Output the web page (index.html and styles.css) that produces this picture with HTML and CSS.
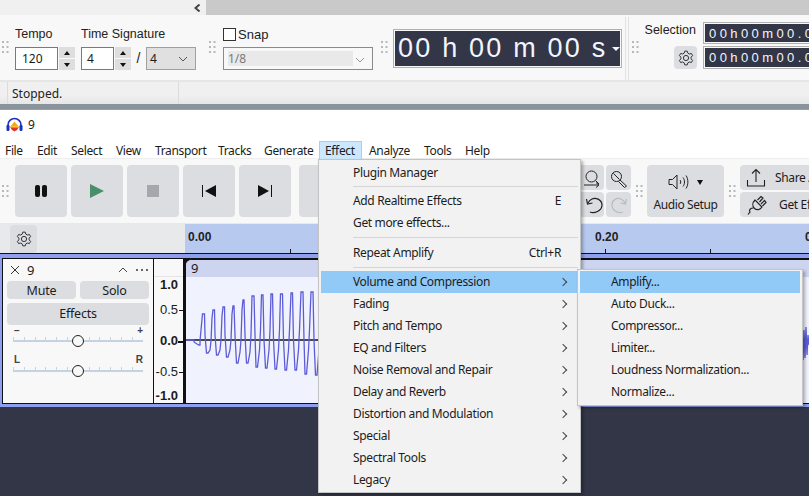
FILE: index.html
```html
<!DOCTYPE html>
<html lang="en">
<head>
  <meta charset="UTF-8">
  <title>Audacity - Effect menu</title>
  <link rel="stylesheet" href="styles.css">
</head>
<body>
  <svg class="defs" width="0" height="0">
    <symbol id="grip" viewBox="0 0 7 13">
      <rect x="0" y="0" width="2" height="2"/><rect x="4.5" y="0" width="2" height="2"/>
      <rect x="0" y="5" width="2" height="2"/><rect x="4.5" y="5" width="2" height="2"/>
      <rect x="0" y="10" width="2" height="2"/><rect x="4.5" y="10" width="2" height="2"/>
    </symbol>
    <symbol id="gear" viewBox="0 0 16 16">
      <path fill="none" stroke="#33343a" stroke-width="1" stroke-linejoin="round" d="M6.2 3.1 6.8 1.1H9.2L9.8 3.1 11.3 4 13.4 3.5 14.6 5.6 13.1 7.1V8.9L14.6 10.4 13.4 12.5 11.3 12 9.8 12.9 9.2 14.9H6.8L6.2 12.9 4.7 12 2.6 12.5 1.4 10.4 2.9 8.9V7.1L1.4 5.6 2.6 3.5 4.7 4Z"/>
      <circle cx="8" cy="8" r="2.6" fill="none" stroke="#33343a"/>
    </symbol>
    <symbol id="chev" viewBox="0 0 10 6">
      <path d="M1 1 5 5 9 1" fill="none" stroke="currentColor" stroke-width="1"/>
    </symbol>
  </svg>

  <div class="collapse-bar">
    <div class="collapse-left">
      <svg class="collapse-icon" width="7" height="8" viewBox="0 0 7 8"><path d="M5.5 .5 1.5 4 5.5 7.5" fill="none" stroke="#444" stroke-width="2"/></svg>
    </div>
    <div class="collapse-right"></div>
  </div>

  <div class="top-toolbar">
    <svg class="grip grip-first"><use href="#grip"/></svg>
    <div class="tool-group tempo">
      <div class="tool-label">Tempo</div>
      <div class="field-row">
        <div class="num-input w-tempo">120</div>
        <div class="spinner"><span class="spin-btn"><i class="tri-up"></i></span><span class="spin-btn"><i class="tri-down"></i></span></div>
      </div>
    </div>
    <div class="tool-group signature">
      <div class="tool-label">Time Signature</div>
      <div class="field-row">
        <div class="num-input w-sig">4</div>
        <div class="spinner"><span class="spin-btn"><i class="tri-up"></i></span><span class="spin-btn"><i class="tri-down"></i></span></div>
        <span class="slash">/</span>
        <div class="sig-select">4<svg class="select-chev" width="10" height="6"><use href="#chev"/></svg></div>
      </div>
    </div>
    <svg class="grip grip-snap"><use href="#grip"/></svg>
    <div class="tool-group snap">
      <div class="snap-label"><span class="checkbox"></span>Snap</div>
      <div class="snap-select"><span class="snap-value">1/8</span><svg class="select-chev light" width="10" height="6"><use href="#chev"/></svg></div>
    </div>
    <svg class="grip grip-time"><use href="#grip"/></svg>
    <div class="time-display">00 h 00 m 00 s<i class="time-arrow"></i></div>
    <div class="double-sep"></div>
    <svg class="grip grip-sel"><use href="#grip"/></svg>
    <div class="selection">
      <div class="sel-side">
        <div class="sel-label">Selection</div>
        <div class="gear-btn small"><svg width="16" height="16"><use href="#gear"/></svg></div>
      </div>
      <div class="sel-fields">
        <div class="sel-time">00h00m00.0</div>
        <div class="sel-time">00h00m00.0</div>
      </div>
    </div>
  </div>

  <div class="status-bar"><div class="status-cell">Stopped.</div></div>
  <div class="window-edge"></div>

  <div class="title-bar">
    <svg class="app-logo" width="17" height="15" viewBox="0 0 17 15">
      <path d="M2 11V8a6.5 6.5 0 0 1 13 0v3" fill="none" stroke="#1c2fc4" stroke-width="1.6"/>
      <rect x=".5" y="8" width="3" height="6" rx="1.2" fill="#1c2fc4"/>
      <rect x="13.5" y="8" width="3" height="6" rx="1.2" fill="#1c2fc4"/>
      <path d="M4 10 6 7.5 8.5 4.5 11 7.5 13 10Z" fill="#f6a623"/>
      <path d="M4 10H13L11 13 8.5 14.5 6 13Z" fill="#e2352a"/>
      <rect x="4" y="9.5" width="9" height="1" fill="#f9d648"/>
    </svg>
    <span>9</span>
  </div>

  <div class="menu-bar">
    <span class="menu-item m-file">File</span>
    <span class="menu-item m-edit">Edit</span>
    <span class="menu-item m-select">Select</span>
    <span class="menu-item m-view">View</span>
    <span class="menu-item m-transport">Transport</span>
    <span class="menu-item m-tracks">Tracks</span>
    <span class="menu-item m-generate">Generate</span>
    <span class="menu-item m-effect active">Effect</span>
    <span class="menu-item m-analyze">Analyze</span>
    <span class="menu-item m-tools">Tools</span>
    <span class="menu-item m-help">Help</span>
  </div>

  <div class="transport-row">
    <svg class="grip grip-first"><use href="#grip"/></svg>
    <div class="big-btn first">
      <svg width="14" height="14" viewBox="0 0 14 14"><rect x="1" y="1" width="5" height="12" rx="2" fill="#111"/><rect x="8" y="1" width="5" height="12" rx="2" fill="#111"/></svg>
    </div>
    <div class="big-btn">
      <svg width="16" height="16" viewBox="0 0 16 16"><path d="M1 1 15 8 1 15Z" fill="#4a8f6c"/></svg>
    </div>
    <div class="big-btn">
      <svg width="12" height="12" viewBox="0 0 12 12"><rect width="12" height="12" fill="#a4a7ae"/></svg>
    </div>
    <div class="big-btn">
      <svg width="16" height="14" viewBox="0 0 16 14"><rect x="1" y="1" width="1" height="12" fill="#111"/><path d="M15 1V13L4 7Z" fill="#111"/></svg>
    </div>
    <div class="big-btn">
      <svg width="16" height="14" viewBox="0 0 16 14"><rect x="14" y="1" width="1" height="12" fill="#111"/><path d="M1 1V13L12 7Z" fill="#111"/></svg>
    </div>
    <div class="big-btn after-gap"></div>

    <div class="zoom-grid">
      <div class="small-btn">
        <svg width="22" height="22" viewBox="0 0 22 22" fill="none" stroke="#222"><circle cx="10.5" cy="9.5" r="5.5"/><path d="M14.5 13.5 18 17M3 18H17M15 15.5 18 18 15 20.5"/></svg>
      </div>
      <div class="small-btn">
        <svg width="22" height="22" viewBox="0 0 22 22" fill="none" stroke="#222"><circle cx="8.5" cy="9.5" r="5"/><path d="M12 13 18.5 19 16.5 20.5 10.5 14.5"/><path d="M5.5 6.5 11.5 12.5"/></svg>
      </div>
      <div class="small-btn">
        <svg width="22" height="22" viewBox="0 0 22 22" fill="none" stroke="#222" stroke-width="1.2"><path d="M9 18C13 20 21 17 21 11 21 6 15 3 11 5 9 6 8 7 7 9"/><path d="M5.5 5 6.5 10 11.5 9"/></svg>
      </div>
      <div class="small-btn">
        <svg width="22" height="22" viewBox="0 0 22 22" fill="none" stroke="#b9bbc0" stroke-width="1.2"><path d="M15 18C11 20 4 17 4 11 4 6 9 3 13 5 15 6 16 7 17 9"/><path d="M18.5 5 17.5 10 12.5 9"/></svg>
      </div>
    </div>
    <svg class="grip grip-audio"><use href="#grip"/></svg>
    <div class="audio-btn">
      <div class="audio-icons">
        <svg width="21" height="18" viewBox="0 0 21 18" fill="none" stroke="#222"><path d="M1 6.5H4.5L9 2V16L4.5 11.5H1Z"/><path d="M12 7C13 8 13 10 12 11"/><path d="M15 4.5C17 7 17 11 15 13.5"/><path d="M18 2.5C20.5 6 20.5 12 18 15.5"/></svg>
        <i class="audio-arrow"></i>
      </div>
      <div class="audio-label">Audio Setup</div>
    </div>
    <svg class="grip grip-share"><use href="#grip"/></svg>
    <div class="share-col">
      <div class="share-btn">
        <svg width="20" height="20" viewBox="0 0 20 20" fill="none" stroke="#222" stroke-width="1.1"><path d="M1.5 12V18H18.5V12"/><path d="M10 14V2M6 5.5 10 1.5 14 5.5"/></svg>
        <span>Share Audio</span>
      </div>
      <div class="share-btn plug">
        <svg width="22" height="22" viewBox="0 0 22 22" fill="none" stroke="#222" stroke-width="1.2"><path d="M9 6 16 13C14 16 11 16.500 8.500 14.500 6 12 6.500 8.500 9 6Z"/><path d="M11.500 6 15 2.500 17 4 13.500 8M15 10 18.500 6.500 20 8.500 16.500 12"/><path d="M7.500 14C4.500 14 2.500 16 4 18L2 20.500"/></svg>
        <span>Get Effects</span>
      </div>
    </div>
  </div>

  <div class="ruler-row">
    <div class="ruler-side"><div class="gear-btn"><svg width="16" height="16"><use href="#gear"/></svg></div></div>
    <div class="ruler">
      <span class="ruler-num r-zero">0.00</span>
      <span class="ruler-tick t-a"></span>
      <span class="ruler-num r-two">0.20</span>
      <span class="ruler-tick t-b"></span>
      <span class="ruler-tick t-c"></span>
      <span class="ruler-num r-three">0.30</span>
    </div>
  </div>

  <div class="track-area">
    <div class="track-row">
      <div class="track-panel">
        <div class="panel-head">
          <svg class="close-x" width="10" height="10" viewBox="0 0 10 10"><path d="M1 1 9 9M9 1 1 9" stroke="#333" fill="none"/></svg>
          <span class="track-name">9</span>
          <svg class="collapse-up" width="10" height="6" viewBox="0 0 10 6"><path d="M1 5 5 1 9 5" fill="none" stroke="currentColor"/></svg>
          <span class="more-dots"><i></i><i></i><i></i></span>
        </div>
        <div class="btn-pair"><div class="panel-btn">Mute</div><div class="panel-btn">Solo</div></div>
        <div class="panel-btn effects">Effects</div>
        <div class="slider-caption gain-cap"><span>−</span><span>+</span></div>
        <div class="slider"><i class="thumb"></i></div>
        <div class="slider-caption pan-cap"><span>L</span><span>R</span></div>
        <div class="slider"><i class="thumb"></i></div>
      </div>
      <div class="v-ruler">
        <span class="v-num strong v1">1.0</span>
        <span class="v-num tick v2">0.5</span>
        <span class="v-num strong tick v3">0.0</span>
        <span class="v-num tick v4">-0.5</span>
        <span class="v-num strong v5">-1.0</span>
      </div>
      <div class="clip">
        <div class="clip-head">9</div>
        <svg class="wave" viewBox="186 277 623 126" preserveAspectRatio="none">
          <path d="M186 340H809" stroke="#111" stroke-width="1.5"/>
          <path d="M186 340H194V342L197 344 199 345H200V341L201 330 202.5 314H204.5L205 335 206.5 353H208L210 350 211 341 212 318 213 310H214.5L215 335 216.5 355H218L220 350 221 340 222 316 223 307H224.5L225 335 226.5 357H228L230 350 231 340 232 314 233 306H234L235 335 236.5 363H238L240 352 241 340 242 310 243 300H244L245 335 246.5 363H248L250 352 251 335 252 296H254L255 335 256 367H257.5L259.5 350 260.5 330 261.5 295H263L264 340 265.5 368H267L269 350 270 330 271 294H272.5L273.5 340 275 369H276.5L278.5 350 279.5 330 280.5 294H282.5L283.5 340 285 370H286.5L288.5 350 289.5 330 291 293H292.5L293.5 340 295 370H296.5L298.5 350 299.5 330 301 292H303L304 340 305 374H306.5L308.5 350 309.5 330 311 292H313L314 340 315.5 375H317L319 350 330 340M800 340 803 360 804 330 805 358 806 327 807 355 808 335 809 345" fill="none" stroke="#5c5cd8" stroke-width="1.3"/>
        </svg>
      </div>
    </div>
  </div>
  <div class="workspace"></div>

  <div class="popup effect-menu">
    <div class="popup-item">Plugin Manager</div>
    <div class="popup-sep"></div>
    <div class="popup-item">Add Realtime Effects<span class="shortcut">E</span></div>
    <div class="popup-item">Get more effects...</div>
    <div class="popup-sep"></div>
    <div class="popup-item">Repeat Amplify<span class="shortcut">Ctrl+R</span></div>
    <div class="popup-sep thin"></div>
    <div class="popup-item sub hot">Volume and Compression</div>
    <div class="popup-item sub">Fading</div>
    <div class="popup-item sub">Pitch and Tempo</div>
    <div class="popup-item sub">EQ and Filters</div>
    <div class="popup-item sub">Noise Removal and Repair</div>
    <div class="popup-item sub">Delay and Reverb</div>
    <div class="popup-item sub">Distortion and Modulation</div>
    <div class="popup-item sub">Special</div>
    <div class="popup-item sub">Spectral Tools</div>
    <div class="popup-item sub">Legacy</div>
  </div>

  <div class="popup volume-menu">
    <div class="popup-item hot">Amplify...</div>
    <div class="popup-item">Auto Duck...</div>
    <div class="popup-item">Compressor...</div>
    <div class="popup-item">Limiter...</div>
    <div class="popup-item">Loudness Normalization...</div>
    <div class="popup-item">Normalize...</div>
  </div>
</body>
</html>
```

FILE: styles.css
```css
* {
  box-sizing: border-box;
}
body {
  margin: 0;
  width: 809px;
  height: 496px;
  overflow: hidden;
  position: relative;
  font-family: "Noto Sans", Arial, sans-serif;
  font-size: 12px;
  color: #1c1c1c;
  background: #fff;
}
.defs {
  position: absolute;
}
.grip {
  width: 7px;
  height: 13px;
  flex: none;
  fill: #b4b8c0;
}

/* top toolbar */
.collapse-bar {
  display: flex;
  height: 15px;
}
.collapse-left {
  width: 206px;
  background: #f0f0f0;
  display: flex;
  justify-content: flex-end;
  align-items: center;
  padding-right: 5px;
}
.collapse-right {
  flex: 1;
  background: #c9c9c9;
}
.top-toolbar {
  display: flex;
  height: 67px;
  background: #f8f8f8;
  border-bottom: 2px solid #e6e6e6;
  font-family: "Liberation Sans", Arial, sans-serif;
  font-size: 12.5px;
}
.top-toolbar .grip {
  margin-top: 26px;
}
.top-toolbar .grip-first {
  margin-left: 2px;
}
.tool-group {
  padding-top: 11px;
}
.tempo {
  margin-left: 6px;
}
.signature {
  margin-left: 6px;
}
.tool-label {
  height: 16px;
  line-height: 16px;
  margin-bottom: 5px;
  color: #222;
}
.field-row {
  display: flex;
}
.num-input {
  height: 23px;
  background: #fff;
  border: 1px solid #7a7a7a;
  line-height: 21px;
  padding-left: 5px;
  font-family: "Noto Sans", sans-serif;
  font-size: 12px;
}
.w-tempo {
  width: 43px;
  padding-left: 6px;
}
.w-sig {
  width: 33px;
}
.spinner {
  width: 16px;
  margin-left: 1px;
  display: flex;
  flex-direction: column;
  gap: 1px;
}
.spin-btn {
  flex: 1;
  background: #dedede;
  display: flex;
  align-items: center;
  justify-content: center;
}
.tri-up,
.tri-down {
  width: 0;
  height: 0;
  border-left: 3.5px solid transparent;
  border-right: 3.5px solid transparent;
}
.tri-up {
  border-bottom: 4px solid #111;
}
.tri-down {
  border-top: 4px solid #111;
}
.slash {
  width: 15px;
  text-align: center;
  line-height: 23px;
  font-size: 14px;
}
.sig-select {
  width: 50px;
  height: 23px;
  background: #e0e0e0;
  border: 1px solid #a0a0a0;
  line-height: 22px;
  padding-left: 3px;
  position: relative;
  font-family: "Noto Sans", sans-serif;
  font-size: 12px;
}
.select-chev {
  position: absolute;
  right: 7px;
  top: 8px;
  color: #555;
}
.select-chev.light {
  color: #999;
  top: 9px;
}
.grip-snap {
  margin-left: 13px;
}
.snap {
  margin-left: 7px;
  width: 150px;
  padding-top: 12px;
}
.snap-label {
  display: flex;
  align-items: center;
  gap: 2px;
  height: 14px;
  margin-bottom: 6px;
  font-size: 13px;
}
.checkbox {
  width: 13px;
  height: 13px;
  background: #fff;
  border: 1px solid #333;
}
.snap-select {
  height: 23px;
  border: 1px solid #8a8a8a;
  padding: 3px 0 0 4px;
  position: relative;
  background: #f8f8f8;
}
.snap-value {
  display: block;
  width: 125px;
  height: 15px;
  line-height: 15px;
  background: #e9e9e9;
  color: #7a7a7a;
  font-family: "Noto Sans", sans-serif;
  font-size: 12px;
}
.grip-time {
  margin-left: 8px;
}
.time-display {
  margin: 14px 0 0 5px;
  width: 229px;
  height: 39px;
  background: #323647;
  border: 1px solid #b0b0b0;
  box-shadow: inset 0 0 0 1px #f8f8f8;
  color: #f2f5ff;
  font-size: 27px;
  line-height: 37px;
  letter-spacing: 2.2px;
  padding-left: 4px;
  position: relative;
  white-space: nowrap;
}
.time-arrow {
  position: absolute;
  right: 1px;
  top: 17px;
  border-left: 4px solid transparent;
  border-right: 4px solid transparent;
  border-top: 4px solid #f2f5ff;
}
.double-sep {
  width: 4px;
  margin: 2px 0 0 3px;
  border-left: 1px solid #e2e2e2;
  border-right: 1px solid #e2e2e2;
}
.grip-sel {
  margin-left: 3px;
}
.selection {
  display: flex;
  margin-left: 7px;
  padding-top: 7px;
}
.sel-side {
  width: 51px;
  display: flex;
  flex-direction: column;
  align-items: flex-end;
}
.sel-label {
  height: 17px;
  line-height: 17px;
  margin-bottom: 7px;
  margin-right: 1px;
}
.sel-fields {
  margin-left: 6px;
  display: flex;
  flex-direction: column;
  gap: 2px;
  width: 106px;
  overflow: hidden;
}
.sel-time {
  width: 110px;
  height: 22px;
  background: #323647;
  border: 1px solid #b0b0b0;
  box-shadow: inset 0 0 0 1px #f8f8f8;
  color: #f2f5ff;
  font-size: 13px;
  line-height: 21px;
  padding-left: 5px;
  letter-spacing: 3.4px;
  white-space: nowrap;
  overflow: hidden;
}
.sel-fields .sel-time:last-child {
  height: 23px;
}
.gear-btn {
  width: 27px;
  height: 28px;
  background: #dcdde1;
  border-radius: 4px;
  display: flex;
  align-items: center;
  justify-content: center;
}
.gear-btn.small {
  width: 23px;
  height: 23px;
}

/* status */
.status-bar {
  height: 22px;
  background: linear-gradient(#f0f0f0, #f0f0f0 60%, #e6e6e6);
  padding-left: 7px;
}
.status-cell {
  width: 172px;
  height: 100%;
  border-left: 1px solid #dcdcdc;
  border-right: 1px solid #dcdcdc;
  padding-left: 4px;
  line-height: 23px;
  color: #222;
}
.window-edge {
  height: 6px;
  background: #8a929c;
  border-bottom: 1px solid #9aa1aa;
}

/* title and menu */
.title-bar {
  height: 23px;
  display: flex;
  align-items: center;
  gap: 5px;
  padding: 5px 0 0 6px;
  background: #fff;
}
.menu-bar {
  height: 25px;
  padding-top: 8px;
  display: flex;
  background: #fff;
}
.menu-item {
  height: 18px;
  line-height: 19px;
  letter-spacing: -.35px;
  flex: none;
}
.m-file { margin-left: 5px; width: 32px; }
.m-edit { width: 34px; }
.m-select { width: 45px; }
.m-view { width: 39px; }
.m-transport { width: 63px; }
.m-tracks { width: 46px; }
.m-generate { width: 55px; }
.m-effect { width: 43px; padding-left: 5px; }
.m-analyze { width: 55px; margin-left: 7px; }
.m-tools { width: 41px; }
.m-help { width: 40px; }
.menu-item.active {
  background: #cce8ff;
  border: 1px solid #99d1ff;
  border-bottom: none;
  line-height: 18px;
}

/* transport */
.transport-row {
  height: 66px;
  display: flex;
  align-items: center;
  background: #f8f8f8;
  border-top: 1px solid #eee;
  border-bottom: 1px solid #e8e8e8;
}
.transport-row .grip-first {
  margin-left: 2px;
}
.big-btn {
  width: 52px;
  height: 52px;
  margin-left: 4px;
  background: #dcdde1;
  border-radius: 4px;
  flex: none;
  display: flex;
  align-items: center;
  justify-content: center;
}
.big-btn.first {
  margin-left: 6px;
}
.big-btn.after-gap {
  margin-left: 8px;
}
.zoom-grid {
  margin-left: 228px;
  display: grid;
  grid-template-columns: 25px 25px;
  grid-auto-rows: 25px;
  gap: 2px;
  flex: none;
}
.small-btn {
  background: #dcdde1;
  border-radius: 4px;
  display: flex;
  align-items: center;
  justify-content: center;
}
.grip-audio {
  margin-left: 5px;
}
.audio-btn {
  width: 77px;
  height: 52px;
  margin-left: 4px;
  background: #dcdde1;
  border-radius: 4px;
  flex: none;
  text-align: center;
  padding-top: 5px;
}
.audio-icons {
  display: flex;
  justify-content: center;
  align-items: center;
  gap: 8px;
  height: 24px;
}
.audio-arrow {
  border-left: 3.5px solid transparent;
  border-right: 3.5px solid transparent;
  border-top: 5px solid #111;
}
.audio-label {
  line-height: 22px;
  letter-spacing: -.4px;
}
.grip-share {
  margin-left: 5px;
}
.share-col {
  margin-left: 4px;
  width: 80px;
  display: flex;
  flex-direction: column;
  gap: 2px;
  flex: none;
}
.share-btn {
  height: 25px;
  background: #dcdde1;
  border-radius: 4px;
  display: flex;
  align-items: center;
  padding-left: 6px;
  gap: 9px;
  white-space: nowrap;
  letter-spacing: -.35px;
}
.share-btn svg {
  flex: none;
}
.share-btn.plug {
  gap: 11px;
}

/* ruler */
.ruler-row {
  height: 29px;
  display: flex;
}
.ruler-side {
  width: 185px;
  background: #e8e9eb;
  padding: 1px 0 0 10px;
}
.ruler {
  flex: 1;
  background: #b8c9f0;
  position: relative;
}
.ruler-num {
  position: absolute;
  top: 6px;
  font-family: "Liberation Sans", Arial, sans-serif;
  font-weight: bold;
  font-size: 12px;
  line-height: 14px;
  color: #222;
}
.r-zero { left: 3px; }
.r-two { left: 410px; }
.r-three { left: 620px; }
.ruler-tick {
  position: absolute;
  bottom: 0;
  width: 1px;
  height: 4px;
  background: #111;
}
.t-a { left: 105px; }
.t-b { left: 420px; }
.t-c { left: 525px; }

/* tracks */
.track-area {
  height: 154px;
  background: #8f9ff0;
  border-top: 1px solid #111;
  padding: 4px 0 0 2px;
}
.track-row {
  height: 146px;
  display: flex;
  border-top: 1px solid #111;
  border-bottom: 1px solid #111;
  background: #111;
}
.track-panel {
  width: 152px;
  background: #f8f8f8;
  border-left: 1px solid #111;
  border-right: 1px solid #111;
  padding: 0 4px;
}
.panel-head {
  display: flex;
  align-items: center;
  height: 22px;
  padding-left: 3px;
}
.close-x {
  flex: none;
}
.track-name {
  margin-left: 7px;
  width: 91px;
  font-size: 13px;
}
.collapse-up {
  color: #444;
  flex: none;
}
.more-dots {
  display: flex;
  gap: 3px;
  margin-left: 8px;
}
.more-dots i {
  width: 2px;
  height: 2px;
  background: #666;
}
.btn-pair {
  display: flex;
  gap: 4px;
  margin-bottom: 4px;
}
.panel-btn {
  flex: 1;
  height: 18px;
  line-height: 19px;
  background: #dcdde1;
  border-radius: 4px;
  text-align: center;
  font-size: 12.5px;
  letter-spacing: -.2px;
}
.panel-btn.effects {
  height: 22px;
  line-height: 22px;
}
.slider-caption {
  display: flex;
  justify-content: space-between;
  padding: 0 6px 0 7px;
  font-size: 10px;
  line-height: 10px;
  font-weight: bold;
  color: #444;
  font-family: "Liberation Sans", Arial, sans-serif;
}
.gain-cap {
  margin-top: 1px;
}
.pan-cap {
  margin-top: 13px;
  height: 11px;
}
.slider {
  height: 6px;
  margin: 0 6px;
  border-bottom: 2px solid #c4d2e4;
  position: relative;
  background: repeating-linear-gradient(90deg, #c4d2e4 0 1px, transparent 1px 10.8px) 0 1px / 100% 3px no-repeat;
}
.thumb {
  position: absolute;
  left: 59px;
  top: -1px;
  width: 12px;
  height: 12px;
  border-radius: 50%;
  background: #f8f8f8;
  border: 1.5px solid #222;
}
.v-ruler {
  width: 31px;
  background: #f8f8f8 linear-gradient(#e4e4e4, #e4e4e4) 0 17px / 100% 1px no-repeat;
  border-right: 2px solid #111;
  display: flex;
  flex-direction: column;
  align-items: flex-end;
  padding-right: 5px;
  font-family: "Liberation Sans", Arial, sans-serif;
  font-size: 13px;
  line-height: 16px;
}
.v-num {
  height: 16px;
  position: relative;
}
.v-num.tick::after {
  content: "";
  position: absolute;
  right: -5px;
  top: 8px;
  width: 4px;
  height: 1px;
  background: #111;
}
.v3.tick::after {
  height: 2px;
  width: 5px;
}
.strong {
  font-weight: bold;
}
.v1 { margin-top: 18px; }
.v2 { margin-top: 9px; }
.v3 { margin-top: 15px; }
.v4 { margin-top: 15px; }
.v5 { margin-top: 8px; }
.clip {
  flex: 1;
  margin-left: 1px;
  display: flex;
  flex-direction: column;
  overflow: hidden;
  border-top: 1px solid #111;
  border-top-left-radius: 6px;
  background: #f0f2fe;
}
.clip-head {
  height: 17px;
  flex: none;
  background: #ccd4f0;
  padding-left: 5px;
  line-height: 16px;
  font-size: 13px;
}
.wave {
  flex: 1;
  width: 100%;
  display: block;
}
.workspace {
  height: 89px;
  background: #323647;
}

/* popup menus */
.popup {
  position: absolute;
  background: #f2f2f2;
  border: 1px solid #c4c4c4;
  box-shadow: 2px 2px 3px rgba(0, 0, 0, .3);
}
.effect-menu {
  left: 318px;
  top: 159px;
  width: 263px;
  height: 334px;
  padding: 2px;
}
.volume-menu {
  left: 577px;
  top: 269px;
  width: 226px;
  height: 137px;
  padding: 1px 2px;
}
.popup-item {
  height: 22px;
  line-height: 22px;
  position: relative;
  white-space: nowrap;
  letter-spacing: -.35px;
}
.effect-menu .popup-item {
  padding-left: 32px;
}
.volume-menu .popup-item {
  padding-left: 31px;
}
.popup-item.hot {
  background: #91c9f7;
}
.shortcut {
  position: absolute;
  right: 17px;
  top: 0;
}
.popup-item.sub::after {
  content: "";
  position: absolute;
  right: 12px;
  top: 8px;
  width: 5px;
  height: 5px;
  border-top: 1px solid #444;
  border-right: 1px solid #444;
  transform: rotate(45deg);
}
.popup-sep {
  height: 8px;
  margin-left: 32px;
  background: linear-gradient(#d4d4d4, #d4d4d4) 0 3px / 100% 1px no-repeat;
}
.popup-sep:nth-child(2) {
  height: 6px;
  background-position: 0 2px;
}
.popup-sep.thin {
  height: 7px;
}
```
